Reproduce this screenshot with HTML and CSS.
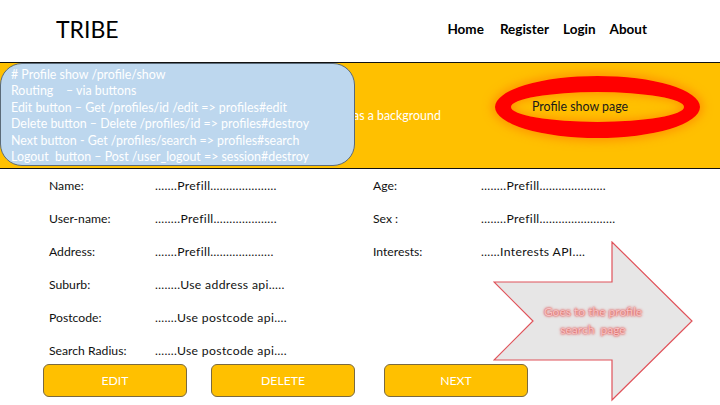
FILE: index.html
```html
<!DOCTYPE html>
<html>
<head>
<meta charset="utf-8">
<link rel="stylesheet" href="styles.css">
</head>
<body>
<div class="page">
  <header class="header">
    <div class="logo">TRIBE</div>
    <nav class="nav">
      <span class="nav-item home">Home</span>
      <span class="nav-item">Register</span>
      <span class="nav-item">Login</span>
      <span class="nav-item">About</span>
    </nav>
  </header>

  <section class="band">
    <div class="band-text">as a background</div>
    <div class="note">
      <div># Profile show /profile/show</div>
      <div>Routing &nbsp;&nbsp;&nbsp;– via buttons</div>
      <div>Edit button – Get /profiles/id /edit =&gt; profiles#edit</div>
      <div>Delete button – Delete /profiles/id =&gt; profiles#destroy</div>
      <div>Next button - Get /profiles/search =&gt; profiles#search</div>
      <div>Logout &nbsp;button – Post /user_logout =&gt; session#destroy</div>
    </div>
    <div class="ring"><span class="ring-text">Profile show page</span></div>
  </section>

  <section class="form">
    <div class="label">Name:</div><div class="value">…….Prefill…………………</div>
    <div class="label">Age:</div><div class="value">……..Prefill…………………</div>

    <div class="label">User-name:</div><div class="value">……..Prefill………………..</div>
    <div class="label">Sex :</div><div class="value">……..Prefill……………………</div>

    <div class="label">Address:</div><div class="value">…….Prefill………………..</div>
    <div class="label">Interests:</div><div class="value">……Interests API.…</div>

    <div class="label">Suburb:</div><div class="value">……..Use address api…..</div>
    <div></div><div></div>

    <div class="label">Postcode:</div><div class="value">…….Use postcode api….</div>
    <div></div><div></div>

    <div class="label">Search Radius:</div><div class="value">…….Use postcode api….</div>
    <div></div><div></div>
  </section>

  <div class="buttons">
    <div class="btn">EDIT</div>
    <div class="btn">DELETE</div>
    <div class="btn next">NEXT</div>
  </div>

  <div class="arrow">
    <svg width="202" height="162" viewBox="0 0 202 162">
      <polygon points="1,41 119,41 119,1 199,80 119,159 119,119 1,119 40,80" fill="#E7E6E6" stroke="#E0525A" stroke-width="1.2"/>
    </svg>
    <div class="arrow-text">Goes to the profile<br>search &nbsp;page</div>
  </div>
</div>
</body>
</html>
```

FILE: styles.css
```css
* { box-sizing: border-box; }
html, body { margin: 0; padding: 0; background: #fff; }
body { font-family: Lato, "Open Sans", "DejaVu Sans", sans-serif; color: #111; }

.page {
  position: relative;
  width: 720px;
  height: 405px;
  overflow: hidden;
}

.header {
  height: 62px;
  display: flex;
  align-items: center;
  padding-left: 56px;
  padding-right: 73px;
  padding-bottom: 4px;
}
.logo {
  font-size: 23px;
  color: #000;
}
.nav {
  margin-left: auto;
  display: flex;
  gap: 14px;
  font-weight: bold;
  font-size: 13.5px;
  color: #000;
}
.home { margin-right: 2px; }

.band {
  position: relative;
  height: 107px;
  background: #FFC000;
  border-top: 1px solid #111;
  border-bottom: 1px solid #111;
}
.band-text {
  position: absolute;
  left: 353px;
  top: 45px;
  color: #fff;
  font-size: 12.4px;
  line-height: 16px;
}
.note {
  position: absolute;
  left: 0;
  top: 0;
  width: 355px;
  height: 103px;
  background: #BDD7EE;
  border: 1px solid #5a6a78;
  border-radius: 22px;
  padding: 3px 0 0 10px;
  color: #fff;
  font-size: 12.4px;
  line-height: 16.4px;
  white-space: nowrap;
}
.ring {
  position: absolute;
  left: 495px;
  top: 13px;
  width: 205px;
  height: 62px;
  border: 16px solid #FF0000;
  border-radius: 50%;
  box-shadow: 0 0 10px 3px rgba(255, 130, 0, 0.7), inset 0 0 8px 2px rgba(255, 130, 0, 0.7);
}
.ring-text {
  display: block;
  padding-left: 21px;
  line-height: 29px;
  font-size: 12.4px;
  color: #1a1a1a;
  white-space: nowrap;
}

.form {
  display: grid;
  grid-template-columns: 106px 218px 108px 1fr;
  grid-template-rows: repeat(5, 33px) 30px;
  padding-left: 49px;
  font-size: 12.2px;
  color: #111;
}
.label, .value {
  line-height: 33px;
  white-space: nowrap;
}
.value { letter-spacing: 0.35px; }

.buttons {
  display: flex;
  gap: 24px;
  padding-left: 43px;
}
.btn {
  width: 144px;
  height: 33px;
  background: #FFC000;
  border: 1px solid #7a6a40;
  border-radius: 6px;
  color: #fff;
  font-size: 12.2px;
  display: flex;
  align-items: center;
  justify-content: center;
}
.btn.next { margin-left: 5px; }

.arrow {
  position: absolute;
  left: 493px;
  top: 241px;
  width: 202px;
  height: 162px;
}
.arrow svg { display: block; }
.arrow-text {
  position: absolute;
  left: 0;
  top: 62px;
  width: 200px;
  text-align: center;
  font-size: 12px;
  line-height: 18px;
  color: #F8C4C4;
  text-shadow: 0 0 2px #d83838, 0 0 3px #e05050;
}
```
